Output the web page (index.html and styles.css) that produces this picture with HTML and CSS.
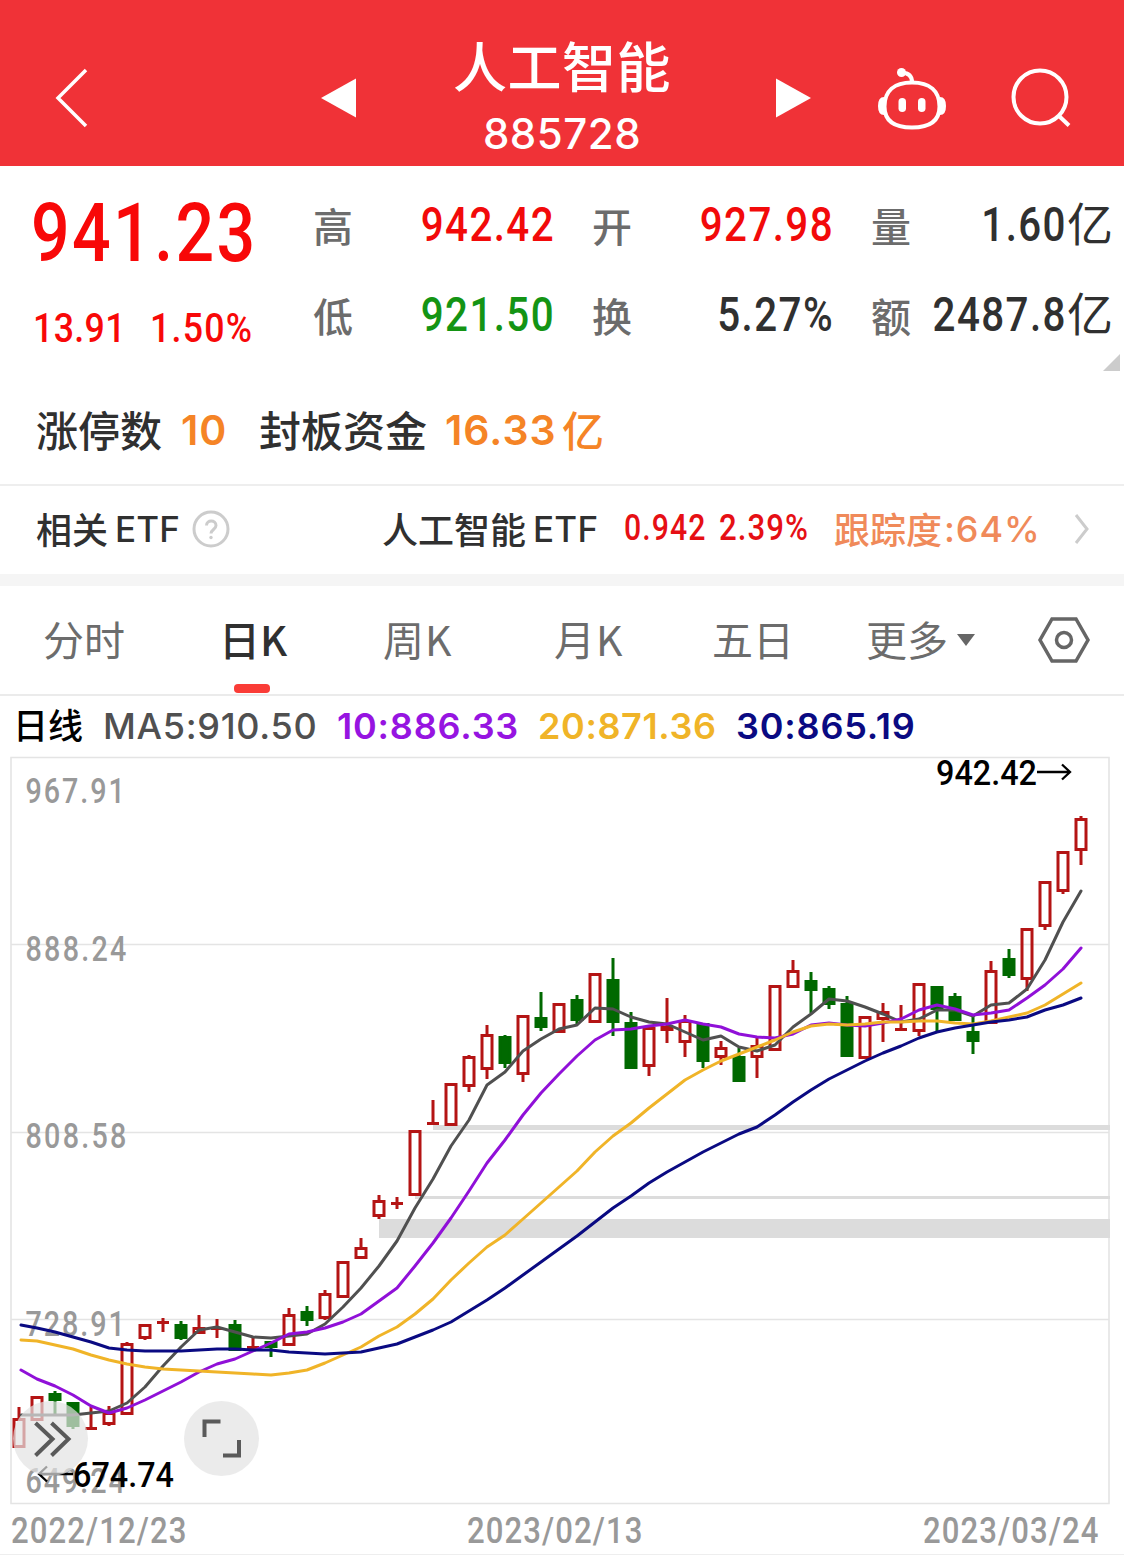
FILE: index.html
```html
<!DOCTYPE html>
<html lang="zh-CN">
<head>
<meta charset="utf-8">
<title>人工智能 885728</title>
<link rel="stylesheet" href="styles.css">
</head>
<body>
<header class="topbar">
  <svg class="back" width="36" height="62" viewBox="0 0 36 62"><path d="M33 3 5 31l28 28"/></svg>
  <svg class="prev" width="36" height="40" viewBox="0 0 36 40"><path d="M0 20 35 .5v39z"/></svg>
  <div class="heading"><h1>人工智能</h1><p>885728</p></div>
  <svg class="next" width="36" height="40" viewBox="0 0 36 40"><path d="M36 20 1 .5v39z"/></svg>
  <svg class="robot" width="72" height="64" viewBox="0 0 72 64">
    <path d="M36 15.500c18 0 27.500 8.500 27.500 24C63.500 54 54 60.500 36 60.500S8.500 54 8.500 39.500c0-15.500 9.500-24 27.500-24z"/>
    <path d="M36 15c0-6-4-9-10-9.500"/>
    <circle class="solid" cx="25.500" cy="5.500" r="4.500"/>
    <path class="solid" d="M8 30q-6 0-6 9t6 9zM64 30q6 0 6 9t-6 9z"/>
    <rect class="solid" x="22.500" y="31" width="7.500" height="14" rx="3.750"/>
    <rect class="solid" x="42" y="31" width="7.500" height="14" rx="3.750"/>
  </svg>
  <svg class="search" width="62" height="62" viewBox="0 0 62 62"><circle cx="29" cy="30" r="26.500"/><path d="m47.500 48.500 10.500 10"/></svg>
</header>

<section class="quote">
  <div class="price">
    <b class="din">941.23</b>
    <div class="change"><span class="din">13.91</span><span class="din">1.50%</span></div>
  </div>
  <dl class="pair high"><dt>高</dt><dd class="din red">942.42</dd><dt>低</dt><dd class="din green">921.50</dd></dl>
  <dl class="pair open"><dt>开</dt><dd class="din red">927.98</dd><dt>换</dt><dd class="din">5.27%</dd></dl>
  <dl class="pair volume"><dt>量</dt><dd class="unit"><span class="din">1.60</span>亿</dd><dt>额</dt><dd class="unit"><span class="din">2487.8</span>亿</dd></dl>
  <i class="corner"></i>
</section>

<section class="limit"><span>涨停数</span><b class="count">10</b><span class="fund">封板资金</span><b class="amount">16.33</b><b>亿</b></section>

<section class="etf">
  <span>相关</span><span class="latin">ETF</span>
  <svg class="help" width="38" height="38" viewBox="0 0 38 38"><circle cx="19" cy="19" r="17"/><path d="M14.500 15.500c0-6 9.500-6 9.500 0 0 4-5 4-5 8"/><circle class="dot" cx="19" cy="27.500" r="1.700"/></svg>
  <span class="name">人工智能</span><span class="latin">ETF</span>
  <span class="din value">0.942</span><span class="din rate">2.39%</span>
  <span class="track">跟踪度</span><span class="degree">:64%</span>
  <svg class="more" width="16" height="34" viewBox="0 0 16 34"><path d="m2 3 11 14L2 31"/></svg>
</section>

<nav class="tabs">
  <a class="t1">分时</a><a class="t2 active">日K</a><a class="t3">周K</a><a class="t4">月K</a><a class="t5">五日</a><a class="t6">更多<i></i></a>
  <svg class="settings" width="54" height="48" viewBox="0 0 54 48"><path d="M15 3h24l12 21-12 21H15L3 24z"/><circle cx="27" cy="24" r="7.500"/></svg>
</nav>

<div class="legend"><b>日线</b><span class="ma5">MA5:910.50</span><span class="ma10">10:886.33</span><span class="ma20">20:871.36</span><span class="ma30">30:865.19</span></div>

<svg class="chart" width="1124" height="749" viewBox="0 756 1124 749">
  <path class="grid" d="M11 757.500H1109V1503.500H11zM11 944.500H1109M11 1132.500H1109M11 1319.500H1109"/>
  <g class="zone"><rect x="433" y="1125" width="677" height="5"/><rect x="415" y="1196" width="695" height="3"/><rect x="379" y="1219" width="731" height="19"/></g>
  <g class="scale">
    <text x="25.500" y="803.500" textLength="121" transform="translate(25.500) scale(.82 1) translate(-25.500)">967.91</text>
    <text x="25.500" y="961" textLength="123" transform="translate(25.500) scale(.82 1) translate(-25.500)">888.24</text>
    <text x="25.500" y="1148.500" textLength="123" transform="translate(25.500) scale(.82 1) translate(-25.500)">808.58</text>
    <text x="25.500" y="1336" textLength="121" transform="translate(25.500) scale(.82 1) translate(-25.500)">728.91</text>
    <text x="25.500" y="1493.500" textLength="121" transform="translate(25.500) scale(.82 1) translate(-25.500)">649.24</text>
  </g>
  <g id="candles"></g>
  <g id="averages"></g>
  <g class="mark">
    <text x="936" y="785" textLength="101" lengthAdjust="spacingAndGlyphs">942.42</text><path d="M1037 772h33M1062 764.500l8 7.500-8 7.500"/>
    <text x="73" y="1487" textLength="101" lengthAdjust="spacingAndGlyphs">674.74</text><path d="M73 1474H39M47 1466.500l-8 7.500 8 7.500"/>
  </g>
  <g class="button"><circle cx="50.500" cy="1438.500" r="37.500"/><path d="m35.500 1423 17 16-17 16.500M51.500 1423l17 16-17 16.500"/></g>
  <g class="button"><circle cx="221.500" cy="1438.500" r="37.500"/><path d="M204.500 1437v-15.500h16M223 1455.500h16V1440"/></g>
</svg>
<footer class="dates"><span class="din">2022/12/23</span><span class="din">2023/02/13</span><span class="din">2023/03/24</span></footer>
<script src="chart.js"></script>
</body>
</html>
```
FILE: styles.css
```css
* { box-sizing: border-box; margin: 0; padding: 0; }
body { width: 1124px; height: 1555px; overflow: hidden; background: #fff; color: #303030; font-family: Inter, "Noto Sans CJK SC", sans-serif; }
svg { display: block; flex: none; }
svg path, svg circle { fill: none; }
span, b, a, dt, dd { white-space: nowrap; }
.din { display: inline-block; font-family: Roboto, sans-serif; font-weight: 500; letter-spacing: .035em; transform: scaleX(.84); transform-origin: left; }
.red { color: #f20a0a; }
.green { color: #149414; }

.topbar { display: flex; align-items: flex-start; height: 166px; background: #f03237; color: #fff; }
.topbar svg { stroke: #fff; stroke-width: 4; }
.back { margin: 67px 0 0 53px; }
.topbar .back { stroke-width: 3.5; }
.topbar .prev, .topbar .next { stroke: none; }
.prev path, .next path, .robot .solid { fill: #fff; }
.robot .solid { stroke: none; }
.prev { margin: 78px 0 0 232px; }
.heading { width: 220px; margin-left: 95px; text-align: center; }
.heading h1 { height: 102px; padding-top: 25px; font: 500 54px/80px "Noto Sans CJK SC", sans-serif; letter-spacing: .5px; }
.heading p { font-size: 42px; line-height: 63px; font-weight: 500; letter-spacing: .5px; }
.next { margin: 78px 0 0 103px; }
.robot { margin: 67px 0 0 65px; }
.search { margin: 67px 0 0 63px; }

.quote { position: relative; display: flex; height: 209px; }
.price { width: 313px; padding-left: 31px; color: #f80808; }
.price b { display: block; height: 122px; padding-top: 20px; font-size: 81px; line-height: 96px; }
.change { display: flex; padding-left: 2px; font-size: 41px; line-height: 80px; }
.change span:first-child { width: 117px; letter-spacing: .01em; }
.change .din { transform: scaleX(.87); }
.pair { display: grid; grid-template-columns: 40px minmax(0, 1fr); grid-auto-rows: 90px; padding-top: 14px; font-size: 48px; line-height: 90px; }
.pair dt { font: 500 40px/90px "Noto Sans CJK SC", sans-serif; color: #6c6c6c; }
.pair dd { text-align: right; transform-origin: right; }
.high { width: 242px; }
.open { width: 242px; margin-left: 37px; }
.volume { width: 242px; margin-left: 37px; }
.pair .unit { margin-left: -30px; font: 400 46px/82px "Noto Sans CJK SC", sans-serif; }
.unit .din { font-size: 48px; transform-origin: right; }
.corner { position: absolute; right: 4px; bottom: 4px; border: solid transparent; border-width: 0 0 17px 17px; border-bottom-color: #ccc; }

.limit { display: flex; height: 109px; padding-left: 36px; font: 500 42px/107px "Noto Sans CJK SC", sans-serif; }
.limit b { color: #f58426; font-weight: 500; }
.limit .count, .limit .amount { font-family: Inter, sans-serif; font-size: 41px; font-weight: 600; line-height: 110px; letter-spacing: 1px; }
.count { width: 78px; padding-left: 19px; }
.fund { margin-left: 19px; }
.amount { width: 117px; margin-left: 18px; }

.etf { display: flex; align-items: center; height: 102px; padding: 0 0 2px 36px; border-top: 2px solid #eee; border-bottom: 12px solid #f5f5f5; font: 500 36px/86px "Noto Sans CJK SC", sans-serif; }
.etf > span:not(.latin):not(.degree) { height: 88px; }
.latin { width: 70px; margin-left: 7px; font-family: Inter, sans-serif; font-size: 35px; letter-spacing: .2px; }
.help { margin-left: 7px; stroke: #ccc; stroke-width: 3; }
.help .dot { fill: #ccc; stroke: none; }
.name { margin-left: 152px; }
.value { width: 95px; margin-left: 21px; color: #e60f14; }
.rate { width: 115px; color: #e60f14; }
.etf .rate { transform: scaleX(.865); }
.track, .degree { color: #f08a5a; }
.degree { width: 130px; margin-left: 2px; font-family: Inter, sans-serif; font-size: 36px; letter-spacing: .9px; }
.more { stroke: #ccc; stroke-width: 3; }

.tabs { display: flex; align-items: center; height: 110px; padding-bottom: 1px; border-bottom: 2px solid #ebebeb; font: 400 41px/100px "Noto Sans CJK SC", sans-serif; color: #6c6c6c; }
.tabs a { height: 109px; line-height: 107px; }
.t1 { width: 176px; margin-left: 43px; }
.t2 { width: 164px; position: relative; }
.t3 { width: 171px; letter-spacing: 1px; }
.t4 { width: 158px; letter-spacing: 1px; }
.t5 { width: 154px; }
.t6 { width: 171px; }
.tabs .active { color: #303030; font-weight: 500; }
.active::after { content: ""; position: absolute; left: 15px; bottom: 1px; width: 36px; height: 9px; border-radius: 4px; background: #fa3c37; }
.t6 i { display: inline-block; margin-left: 9px; border: solid transparent; border-width: 12px 9.5px 0; border-top-color: #666; vertical-align: 10px; }
.settings { stroke: #666; stroke-width: 3.5; }

.legend { display: flex; height: 60px; padding-left: 13px; font-size: 36px; line-height: 60px; font-weight: 600; letter-spacing: .8px; }
.legend b { width: 90px; font: 500 35px/56px "Noto Sans CJK SC", sans-serif; letter-spacing: 0; color: #000; }
.ma5 { width: 234px; color: #505050; font-weight: 500; letter-spacing: .7px; }
.ma10 { width: 201px; color: #9614e1; }
.ma20 { width: 198px; color: #f0b428; letter-spacing: .6px; }
.ma30 { color: #0a0a82; }

.chart { overflow: visible; }
.grid { stroke: #e4e4e4; stroke-width: 1.6; }
.zone { fill: #dcdcdc; }
.chart text { font: 500 35px Roboto, sans-serif; }
.scale { fill: #999; }
.mark path { stroke: #000; stroke-width: 2.3; }
.up { stroke: #b41414; stroke-width: 3; }
.down { stroke: #006900; stroke-width: 3; }
.chart .down rect { fill: #006900; }
.up rect { fill: none; }
#averages { stroke-width: 3; stroke-linejoin: round; stroke-linecap: round; fill: none; }
.button circle { fill: rgba(227, 227, 227, .7); }
.button path { stroke: #5a5a5a; stroke-width: 4; }

.dates { display: flex; justify-content: space-between; height: 51px; padding: 0 4px 0 11px; border-bottom: 2px solid #eee; font-size: 37px; line-height: 52px; color: #999; }
.dates span { width: 197px; }
```
FILE: chart.js
```js
// Each candle: direction, high, body top, body bottom, low
const candles = [
  ['u',1407,1418,1448,1448],['u',1396,1396,1421,1421],['d',1391,1393,1401,1414],['d',1402,1402,1427,1429],
  ['u',1407,1427,1430,1430],['u',1406,1412,1425,1426],['u',1342,1343,1415,1415],['u',1324,1324,1339,1340],
  ['u',1318,1321,1324,1332],['d',1321,1324,1339,1340],['u',1315,1327,1334,1334],['u',1319,1327,1330,1338],
  ['d',1320,1324,1351,1351],['u',1337,1346,1349,1349],['d',1341,1341,1348,1357],['u',1308,1314,1346,1346],
  ['d',1306,1311,1321,1326],['u',1290,1293,1319,1320],['u',1261,1261,1298,1298],['u',1238,1247,1259,1259],
  ['u',1195,1200,1217,1219],['u',1197,1202,1205,1209],['u',1130,1130,1196,1196],['u',1100,1122,1125,1125],
  ['u',1083,1083,1126,1126],['u',1055,1056,1087,1092],['u',1025,1034,1070,1079],['d',1035,1036,1064,1068],
  ['u',1015,1015,1075,1082],['d',992,1017,1028,1031],['u',1003,1003,1033,1033],['d',995,999,1021,1024],
  ['u',973,973,1023,1023],['d',958,979,1023,1036],['d',1012,1022,1069,1069],['u',1027,1027,1067,1076],
  ['u',998,1026,1031,1043],['u',1015,1020,1043,1057],['d',1023,1023,1062,1068],['u',1041,1047,1058,1065],
  ['d',1048,1056,1082,1082],['u',1038,1045,1058,1078],['u',985,985,1051,1051],['u',960,970,988,988],
  ['d',972,980,991,1013],['d',986,988,1005,1009],['d',996,1003,1057,1057],['u',1016,1016,1059,1059],
  ['u',1003,1011,1020,1042],['u',1005,1028,1031,1031],['u',983,983,1032,1036],['d',986,986,1010,1032],
  ['d',993,996,1021,1021],['d',1015,1031,1042,1054],['u',961,970,1024,1024],['d',949,958,976,978],
  ['u',928,928,980,991],['u',881,881,927,930],['u',851,851,892,894],['u',816,818,851,865]
];
const averages = {
  '#505050': [1415,1415,1415,1415,1413,1411,1403,1387,1366,1347,1330,1327,1332,1337,1338,1336,1334,1324,1307,1288,1266,1241,1208,1179,1146,1120,1085,1072,1051,1039,1029,1025,1008,1009,1017,1022,1024,1032,1040,1036,1047,1051,1045,1027,1014,999,1001,1007,1014,1022,1019,1010,1010,1016,1005,1003,989,960,922,891],
  '#9010d8': [1370,1379,1386,1395,1406,1413,1408,1400,1391,1382,1372,1364,1359,1351,1343,1334,1332,1328,1322,1314,1301,1288,1266,1243,1218,1191,1163,1140,1115,1093,1074,1056,1040,1030,1029,1026,1024,1020,1024,1027,1034,1037,1038,1034,1025,1023,1025,1026,1023,1019,1010,1005,1009,1015,1013,1010,998,985,969,948],
  '#f0b428': [1340,1341,1345,1349,1355,1360,1364,1367,1369,1370,1371,1372,1373,1374,1375,1373,1370,1363,1355,1347,1336,1327,1314,1299,1280,1263,1247,1235,1219,1203,1187,1171,1152,1136,1123,1108,1094,1080,1070,1061,1054,1047,1040,1032,1026,1024,1025,1024,1022,1022,1021,1021,1023,1024,1021,1017,1013,1005,994,983],
  '#0a0a82': [1325,1328,1332,1337,1342,1348,1350,1351,1351,1351,1350,1349,1349,1350,1350,1352,1353,1354,1353,1352,1348,1344,1337,1330,1322,1311,1300,1288,1275,1262,1249,1236,1222,1208,1196,1183,1172,1162,1152,1143,1134,1127,1115,1102,1090,1079,1070,1061,1053,1046,1038,1032,1028,1025,1022,1020,1017,1010,1005,998]
};
const x = i => 19 + 18 * i;
document.getElementById('candles').innerHTML = candles.map(([dir, high, top, bottom, low], i) => {
  const flat = bottom - top <= 3;
  const body = flat
    ? `<path d="M${x(i) - 6} ${top + 1.5}h12M${x(i)} ${high}V${low}"/>`
    : `<path d="M${x(i)} ${high}V${top}M${x(i)} ${bottom}V${low}"/><rect x="${x(i) - 5}" y="${top + 1.5}" width="10" height="${bottom - top - 3}"/>`;
  return `<g class="${dir === 'u' ? 'up' : 'down'}">${body}</g>`;
}).join('');
document.getElementById('averages').innerHTML = Object.entries(averages).map(([color, ys]) =>
  `<path stroke="${color}" d="M${ys.map((y, i) => (i ? x(i) : 21) + ' ' + y).join('L')}"/>`).join('');
```
